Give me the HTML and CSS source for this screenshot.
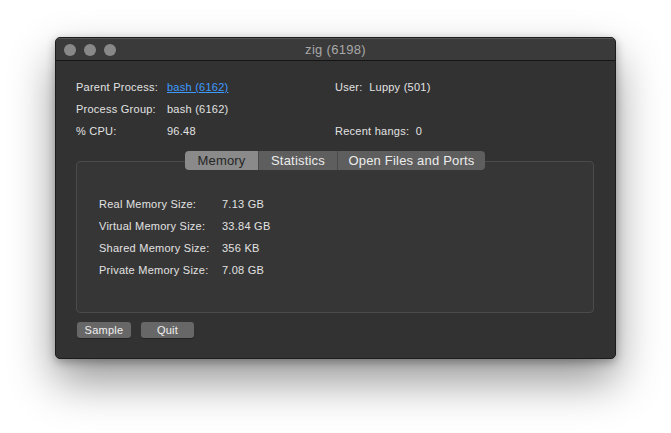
FILE: index.html
```html
<!DOCTYPE html>
<html>
<head>
<meta charset="utf-8">
<link rel="stylesheet" href="styles.css">
</head>
<body>
<div class="window">
  <div class="titlebar">
    <div class="lights"><span class="light"></span><span class="light"></span><span class="light"></span></div>
    <div class="title">zig (6198)</div>
  </div>
  <div class="content">
    <div class="info">
      <span class="lbl">Parent Process:</span><a class="link" href="#">bash (6162)</a><span class="rt">User:&nbsp; Luppy (501)</span>
      <span class="lbl">Process Group:</span><span>bash (6162)</span><span class="rt"></span>
      <span class="lbl">% CPU:</span><span>96.48</span><span class="rt">Recent hangs:&nbsp; 0</span>
    </div>
    <div class="tabgroup">
      <div class="tabs">
        <span class="tab sel t1">Memory</span><span class="tab t2">Statistics</span><span class="tab t3">Open Files and Ports</span>
      </div>
      <div class="box">
        <div class="mem">
          <span>Real Memory Size:</span><span>7.13 GB</span>
          <span>Virtual Memory Size:</span><span>33.84 GB</span>
          <span>Shared Memory Size:</span><span>356 KB</span>
          <span>Private Memory Size:</span><span>7.08 GB</span>
        </div>
      </div>
    </div>
    <div class="buttons">
      <button class="btn b1">Sample</button><button class="btn b2">Quit</button>
    </div>
  </div>
</div>
</body>
</html>
```
FILE: styles.css
```css
html, body { margin: 0; padding: 0; background: #ffffff; }
body { width: 671px; height: 433px; overflow: hidden; font-family: "Liberation Sans", Arial, sans-serif; }
.window {
  margin: 37px 0 0 55px;
  width: 561px;
  height: 322px;
  box-sizing: border-box;
  background: #323232;
  border: 1px solid #1c1c1c;
  border-radius: 5px;
  box-shadow: 0 22px 45px rgba(0,0,0,0.42), 0 3px 10px rgba(0,0,0,0.3);
  overflow: hidden;
}
.titlebar {
  height: 22px;
  background: #3a3a3a;
  border-bottom: 1px solid #151515;
  box-shadow: inset 0 1px 0 #555;
  display: flex;
  align-items: center;
  position: relative;
}
.lights { display: flex; gap: 8px; padding-left: 8px; padding-top: 1px; }
.light { width: 12px; height: 12px; border-radius: 50%; background: #888888; }
.title {
  position: absolute; left: 0; right: 0; top: 0; bottom: 0;
  display: flex; align-items: center; justify-content: center;
  color: #a8a8a8; font-size: 13px; letter-spacing: 0.3px; padding-top: 1px;
}
.content { padding: 15px 21px 0 20px; color: #e2e2e2; font-size: 11px; letter-spacing: 0.25px; }
.info {
  display: grid;
  grid-template-columns: 91px 168px 1fr;
  grid-auto-rows: 22px;
  align-items: center;
}
.link { color: #3d9bff; text-decoration: underline; }
.tabgroup { margin-top: 9px; }
.tabs { display: flex; justify-content: center; position: relative; z-index: 1; height: 19px; letter-spacing: 0.2px; }
.tab {
  display: flex; align-items: center; justify-content: center;
  height: 19px; box-sizing: border-box;
  background: #5e5e5e; color: #ececec; font-size: 13px;
  border-left: 1px solid #4a4a4a;
}
.tab.t1 { width: 73px; border-radius: 4px 0 0 4px; border-left: none; }
.tab.t2 { width: 79px; }
.tab.t3 { width: 148px; border-radius: 0 4px 4px 0; }
.tab.sel { background: #8a8a8a; color: #262626; }
.box {
  margin-top: -9px;
  height: 152px;
  box-sizing: border-box;
  border: 1px solid #4b4b4b;
  border-radius: 4px;
  background: #363636;
  padding: 31px 0 0 22px;
}
.mem {
  display: grid;
  grid-template-columns: 123px 1fr;
  grid-auto-rows: 22px;
  align-items: center;
}
.buttons { display: flex; gap: 10px; margin-top: 9px; padding-left: 1px; }
.btn {
  height: 16px; padding: 0; border: none; border-radius: 3px;
  background: #676767; color: #f0f0f0;
  font-family: "Liberation Sans", Arial, sans-serif; font-size: 11px; letter-spacing: 0.25px;
  box-shadow: 0 1px 0 rgba(0,0,0,0.3);
}
.b1 { width: 54px; }
.b2 { width: 53px; }
```
